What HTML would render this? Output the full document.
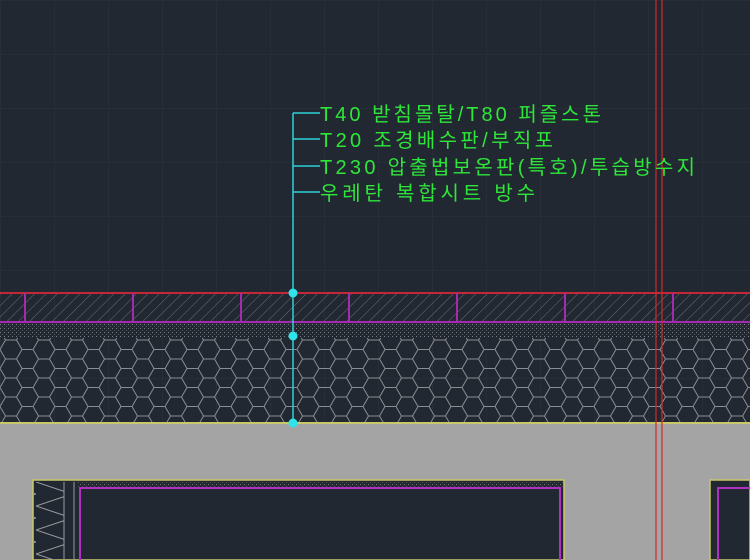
<!DOCTYPE html><html><head><style>body{margin:0;background:#222831;}svg{display:block}</style></head><body>
<svg width="750" height="560" xmlns="http://www.w3.org/2000/svg">
<defs>
<pattern id="grid" width="54" height="54" patternUnits="userSpaceOnUse"><path d="M0 0H54M0 0V54" stroke="#2c333d" stroke-width="1" fill="none"/></pattern>
<pattern id="hatch" width="8" height="8" patternUnits="userSpaceOnUse" patternTransform="rotate(45)"><line x1="0" y1="0" x2="0" y2="8" stroke="#6a6e74" stroke-width="1"/></pattern>
<pattern id="hex" width="33" height="19" patternUnits="userSpaceOnUse" x="0" y="340"><path d="M0 9.5L5.5 0H16.5L22 9.5L16.5 19H5.5Z M22 9.5H33" stroke="#8a8d92" stroke-width="1" fill="none"/></pattern>
<pattern id="dots" width="4" height="4" patternUnits="userSpaceOnUse"><rect x="0" y="0" width="1" height="1" fill="#7a7d80"/><rect x="2" y="2" width="1" height="1" fill="#55585c"/></pattern>
<pattern id="insul" width="36" height="24" patternUnits="userSpaceOnUse" x="36" y="482"><path d="M0 0L36 12L0 24" stroke="#9a9da0" fill="none"/></pattern>
</defs>
<rect width="750" height="560" fill="#222831"/>
<rect width="750" height="560" fill="url(#grid)"/>
<rect x="0" y="293" width="750" height="29" fill="url(#hatch)"/>
<line x1="0" y1="293" x2="750" y2="293" stroke="#c4263a" stroke-width="2"/>
<line x1="0" y1="322" x2="750" y2="322" stroke="#a42ab0" stroke-width="2"/>
<g stroke="#a42ab0" stroke-width="2"><line x1="25" y1="293" x2="25" y2="322"/><line x1="133" y1="293" x2="133" y2="322"/><line x1="241" y1="293" x2="241" y2="322"/><line x1="349" y1="293" x2="349" y2="322"/><line x1="457" y1="293" x2="457" y2="322"/><line x1="565" y1="293" x2="565" y2="322"/><line x1="673" y1="293" x2="673" y2="322"/></g>
<rect x="0" y="323" width="750" height="15" fill="url(#dots)"/>
<rect x="0" y="338" width="750" height="84" fill="url(#hex)"/>
<line x1="0" y1="423" x2="750" y2="423" stroke="#c8c86a" stroke-width="2"/>
<rect x="0" y="424" width="750" height="136" fill="#a4a4a4"/>
<rect x="33" y="480" width="531" height="80" fill="#222831" stroke="#c8c86a" stroke-width="1.5"/>
<rect x="34" y="482" width="30" height="78" fill="url(#insul)"/>
<line x1="64" y1="482" x2="64" y2="560" stroke="#9a9da0"/><line x1="74" y1="482" x2="74" y2="560" stroke="#9a9da0"/>
<rect x="78" y="482" width="486" height="6" fill="url(#dots)"/>
<path d="M80 560V488H560V560" stroke="#b030c0" stroke-width="2" fill="none"/>
<rect x="710" y="480" width="40" height="80" fill="#222831" stroke="#c8c86a" stroke-width="1.5"/>
<path d="M718 560V488H750" stroke="#b030c0" stroke-width="2" fill="none"/>
<line x1="656" y1="0" x2="656" y2="560" stroke="#d02a2a" stroke-width="1.2"/>
<line x1="662" y1="0" x2="662" y2="560" stroke="#d02a2a" stroke-width="1.2"/>
<g stroke="#2cd0d8" stroke-width="1.5"><line x1="293" y1="113" x2="293" y2="423"/><line x1="293" y1="113" x2="320" y2="113"/><line x1="293" y1="139" x2="320" y2="139"/><line x1="293" y1="166" x2="320" y2="166"/><line x1="293" y1="192" x2="320" y2="192"/></g>
<g fill="#2ee4ea"><circle cx="293" cy="293" r="4.5"/><circle cx="293" cy="336" r="4.5"/><circle cx="293" cy="423" r="4.5"/></g>
<g fill="#2ee63a" font-family="Liberation Sans, Noto Sans CJK KR, sans-serif" font-size="20" lengthAdjust="spacing">
<text x="320" y="121" textLength="281">T40 받침몰탈/T80 퍼즐스톤</text>
<text x="320" y="147" textLength="233">T20 조경배수판/부직포</text>
<text x="320" y="174" textLength="375">T230 압출법보온판(특호)/투습방수지</text>
<text x="320" y="200" textLength="215">우레탄 복합시트 방수</text>
</g>
</svg></body></html>
